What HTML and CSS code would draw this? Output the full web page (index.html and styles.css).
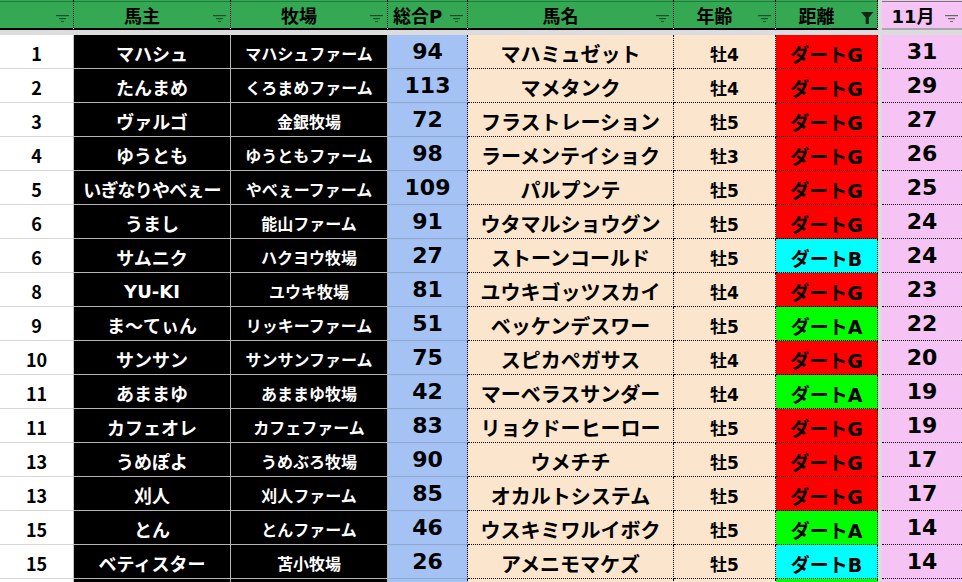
FILE: index.html
```html
<!DOCTYPE html>
<html lang="ja">
<head>
<meta charset="utf-8">
<title>ランキング</title>
<link rel="stylesheet" href="styles.css">
</head>
<body>
<div class="sheet">
  <div class="band-v"></div>
  <div class="band-h"></div>

  <div class="hd"><span class="hd-t"></span><span class="flt"><svg width="14" height="7" viewBox="0 0 14 7"><rect x="0" y="0" width="13" height="1.2"/><rect x="3" y="3" width="7" height="1.2"/><rect x="5" y="6" width="3" height="1"/></svg></span></div>
  <div class="hd"><span class="hd-t">馬主</span><span class="flt"><svg width="14" height="7" viewBox="0 0 14 7"><rect x="0" y="0" width="13" height="1.2"/><rect x="3" y="3" width="7" height="1.2"/><rect x="5" y="6" width="3" height="1"/></svg></span></div>
  <div class="hd"><span class="hd-t">牧場</span><span class="flt"><svg width="14" height="7" viewBox="0 0 14 7"><rect x="0" y="0" width="13" height="1.2"/><rect x="3" y="3" width="7" height="1.2"/><rect x="5" y="6" width="3" height="1"/></svg></span></div>
  <div class="hd"><span class="hd-t">総合P</span><span class="flt"><svg width="14" height="7" viewBox="0 0 14 7"><rect x="0" y="0" width="13" height="1.2"/><rect x="3" y="3" width="7" height="1.2"/><rect x="5" y="6" width="3" height="1"/></svg></span></div>
  <div class="hd"><span class="hd-t">馬名</span><span class="flt"><svg width="14" height="7" viewBox="0 0 14 7"><rect x="0" y="0" width="13" height="1.2"/><rect x="3" y="3" width="7" height="1.2"/><rect x="5" y="6" width="3" height="1"/></svg></span></div>
  <div class="hd"><span class="hd-t">年齢</span><span class="flt"><svg width="14" height="7" viewBox="0 0 14 7"><rect x="0" y="0" width="13" height="1.2"/><rect x="3" y="3" width="7" height="1.2"/><rect x="5" y="6" width="3" height="1"/></svg></span></div>
  <div class="hd"><span class="hd-t">距離</span><span class="flt flt-on"><svg width="13" height="12" viewBox="0 0 13 12"><path d="M0 0H12.5L7.8 5.6V12H4.7V5.6Z"/></svg></span></div>
  <div class="hd hd-mon"><span class="hd-t">11月</span><span class="flt"><svg width="14" height="7" viewBox="0 0 14 7"><rect x="0" y="0" width="13" height="1.2"/><rect x="3" y="3" width="7" height="1.2"/><rect x="5" y="6" width="3" height="1"/></svg></span></div>

  <div class="c no">1</div><div class="c own">マハシュ</div><div class="c farm">マハシュファーム</div><div class="c pt">94</div><div class="c horse">マハミュゼット</div><div class="c age">牡4</div><div class="c dist g">ダートG</div><div class="c mon">31</div>
  <div class="c no">2</div><div class="c own">たんまめ</div><div class="c farm">くろまめファーム</div><div class="c pt">113</div><div class="c horse">マメタンク</div><div class="c age">牡4</div><div class="c dist g">ダートG</div><div class="c mon">29</div>
  <div class="c no">3</div><div class="c own">ヴァルゴ</div><div class="c farm">金銀牧場</div><div class="c pt">72</div><div class="c horse">フラストレーション</div><div class="c age">牡5</div><div class="c dist g">ダートG</div><div class="c mon">27</div>
  <div class="c no">4</div><div class="c own">ゆうとも</div><div class="c farm">ゆうともファーム</div><div class="c pt">98</div><div class="c horse">ラーメンテイショク</div><div class="c age">牡3</div><div class="c dist g">ダートG</div><div class="c mon">26</div>
  <div class="c no">5</div><div class="c own tight">いぎなりやべぇー</div><div class="c farm">やべぇーファーム</div><div class="c pt">109</div><div class="c horse">パルプンテ</div><div class="c age">牡5</div><div class="c dist g">ダートG</div><div class="c mon">25</div>
  <div class="c no">6</div><div class="c own">うまし</div><div class="c farm">能山ファーム</div><div class="c pt">91</div><div class="c horse">ウタマルショウグン</div><div class="c age">牡5</div><div class="c dist g">ダートG</div><div class="c mon">24</div>
  <div class="c no">6</div><div class="c own">サムニク</div><div class="c farm">ハクヨウ牧場</div><div class="c pt">27</div><div class="c horse">ストーンコールド</div><div class="c age">牡5</div><div class="c dist b">ダートB</div><div class="c mon">24</div>
  <div class="c no">8</div><div class="c own">YU-KI</div><div class="c farm">ユウキ牧場</div><div class="c pt">81</div><div class="c horse">ユウキゴッツスカイ</div><div class="c age">牡4</div><div class="c dist g">ダートG</div><div class="c mon">23</div>
  <div class="c no">9</div><div class="c own">ま〜てぃん</div><div class="c farm">リッキーファーム</div><div class="c pt">51</div><div class="c horse">ベッケンデスワー</div><div class="c age">牡5</div><div class="c dist a">ダートA</div><div class="c mon">22</div>
  <div class="c no">10</div><div class="c own">サンサン</div><div class="c farm">サンサンファーム</div><div class="c pt">75</div><div class="c horse">スピカペガサス</div><div class="c age">牡4</div><div class="c dist g">ダートG</div><div class="c mon">20</div>
  <div class="c no">11</div><div class="c own">あままゆ</div><div class="c farm">あままゆ牧場</div><div class="c pt">42</div><div class="c horse">マーベラスサンダー</div><div class="c age">牡4</div><div class="c dist a">ダートA</div><div class="c mon">19</div>
  <div class="c no">11</div><div class="c own">カフェオレ</div><div class="c farm">カフェファーム</div><div class="c pt">83</div><div class="c horse">リョクドーヒーロー</div><div class="c age">牡5</div><div class="c dist g">ダートG</div><div class="c mon">19</div>
  <div class="c no">13</div><div class="c own">うめぽよ</div><div class="c farm">うめぶろ牧場</div><div class="c pt">90</div><div class="c horse">ウメチチ</div><div class="c age">牡5</div><div class="c dist g">ダートG</div><div class="c mon">17</div>
  <div class="c no">13</div><div class="c own">刈人</div><div class="c farm">刈人ファーム</div><div class="c pt">85</div><div class="c horse">オカルトシステム</div><div class="c age">牡5</div><div class="c dist g">ダートG</div><div class="c mon">17</div>
  <div class="c no">15</div><div class="c own">とん</div><div class="c farm">とんファーム</div><div class="c pt">46</div><div class="c horse">ウスキミワルイボク</div><div class="c age">牡5</div><div class="c dist a">ダートA</div><div class="c mon">14</div>
  <div class="c no">15</div><div class="c own">ベティスター</div><div class="c farm">苫小牧場</div><div class="c pt">26</div><div class="c horse">アメニモマケズ</div><div class="c age">牡5</div><div class="c dist b">ダートB</div><div class="c mon">14</div>
  <div class="c no"></div><div class="c own"></div><div class="c farm"></div><div class="c pt"></div><div class="c horse"></div><div class="c age"></div><div class="c dist a"></div><div class="c mon"></div>
</div>
</body>
</html>
```
FILE: styles.css
```css
html, body {
  margin: 0;
  padding: 0;
  background: #ffffff;
  overflow: hidden;
}
body {
  width: 962px;
  height: 582px;
  font-family: "DejaVu Sans", "Noto Sans CJK JP", sans-serif;
}
.sheet {
  display: grid;
  grid-template-columns: 74px 157px 157px 80px 206px 102px 102px 4px 80px;
  grid-template-rows: 30px 5px repeat(16, 34px) 4px;
}
.band-v {
  grid-column: 8;
  grid-row: 1 / -1;
  background: #dcdcdf;
}
.band-h {
  grid-column: 1 / -1;
  grid-row: 2;
  background: #dcdcdf;
}

/* header */
.hd {
  box-sizing: border-box;
  display: flex;
  align-items: center;
  background: linear-gradient(#34a853 0 1px, #1f7e3b 1px 2px, #34a853 2px);
  border-right: 1px dotted #000;
  border-bottom: 2px solid #000;
  font-size: 18px;
  font-weight: 700;
  color: #000;
  white-space: nowrap;
}
.hd-t {
  flex: 1;
  text-align: center;
  padding-top: 2px;
}
.flt {
  width: 20px;
  display: flex;
  justify-content: center;
  padding-top: 8px;
}
.flt svg { display: block; fill: #1d4f2b; }
.flt-on { padding-top: 7px; }
.flt-on svg { fill: #14251a; }
.hd-mon {
  background: linear-gradient(#f5c3f4 0 1px, #6f7a70 1px 2px, #f5c3f4 2px);
  border-right: none;
  border-bottom: 2px solid #a9a9ad;
}
.hd-mon .flt svg { fill: #5d6b60; }
.hd-mon .hd-t { padding-left: 2px; }

/* body cells */
.c {
  box-sizing: border-box;
  display: flex;
  align-items: center;
  justify-content: center;
  padding-top: 3px;
  font-weight: 700;
  color: #000;
  white-space: nowrap;
  overflow: hidden;
}
.no {
  background: #ffffff;
  border-right: 1px solid #c4c4c4;
  border-bottom: 1px solid #d6d6d6;
  font-family: "Noto Sans CJK JP", sans-serif;
  font-size: 18px;
}
.own, .farm {
  background: #000000;
  color: #ffffff;
  border-right: 1px solid #b4b4b4;
  border-bottom: 1px solid #b4b4b4;
}
.own { font-size: 18px; }
.own.tight { letter-spacing: -0.8px; }
.farm { font-size: 16px; }
.pt {
  background: #a4c2f4;
  border-right: 1px dotted #000;
  border-bottom: 1px solid #8fa6cf;
  font-size: 22px;
  padding-top: 0;
}
.horse {
  background: #fce5cd;
  border-right: 1px dotted #000;
  border-bottom: 1px dotted #000;
  font-size: 20px;
}
.age {
  background: #fce5cd;
  border-right: 1px dotted #000;
  border-bottom: 1px dotted #000;
  font-size: 17px;
}
.dist {
  border-right: 1px dotted #000;
  border-bottom: 1px dotted #000;
  font-size: 19px;
}
.dist.g { background: #ff0000; }
.dist.b { background: #00ffff; }
.dist.a { background: #00ff00; }
.mon {
  background: #f5c3f4;
  border-bottom: 1px dotted #000;
  font-size: 22px;
  padding-top: 0;
}
```
